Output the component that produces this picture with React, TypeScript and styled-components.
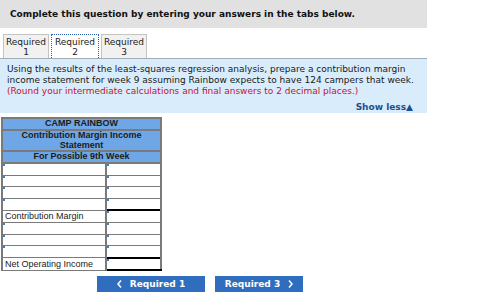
import React from "react";
import styled, { createGlobalStyle } from "styled-components";

const Global = createGlobalStyle`
  html, body { margin: 0; padding: 0; background: #fff; }
  body { font-family: "DejaVu Sans", Verdana, sans-serif; }
`;

const Page = styled.div`
  width: 427px;
`;

const Header = styled.div`
  background: #e1e1e1;
  height: 28px;
  display: flex;
  align-items: center;
  padding-left: 10px;
  font-size: 9px;
  font-weight: bold;
  color: #111;
`;

const Tabs = styled.div`
  display: flex;
  align-items: flex-end;
  gap: 2px;
  margin-top: 6px;
  padding-left: 3px;
  border-bottom: 1px solid #a3abb3;
`;

const Tab = styled.div<{ $active?: boolean }>`
  width: ${(p) => (p.$active ? 48 : 46)}px;
  height: 24px;
  box-sizing: border-box;
  display: flex;
  flex-direction: column;
  align-items: center;
  justify-content: center;
  font-size: 9px;
  line-height: 10px;
  color: #222;
  background: ${(p) => (p.$active ? "#fff" : "#f1f1f1")};
  border: ${(p) => (p.$active ? "1px dotted #2a5db0" : "1px solid #c4c4c4")};
  border-bottom: none;
`;

const Instructions = styled.div`
  background: #d9ecfb;
  padding: 5px 3px 1px 7px;
  font-size: 9px;
  line-height: 11px;
  color: #1a1a1a;
  height: 48px;
`;

const Red = styled.div`
  color: #c8102e;
`;

const ShowLess = styled.div`
  text-align: right;
  margin: 5px 11px 0 0;
  font-weight: bold;
  color: #1d4f8f;
  font-size: 9px;
`;

const Table = styled.table`
  margin: 4px 0 0 1px;
  border-collapse: collapse;
  width: 159px;
  font-family: "Liberation Sans", Arial, sans-serif;
  font-size: 9px;
  table-layout: fixed;
`;

const HeadCell = styled.td<{ $h: number }>`
  background: #6ea6e6;
  border: 2px solid #7a7a7a;
  text-align: center;
  font-weight: bold;
  color: #1b1b1b;
  padding: 0;
  line-height: 9.5px;
  height: ${(p) => p.$h}px;
`;

const Cell = styled.td<{ $top?: boolean; $bottom?: boolean }>`
  position: relative;
  border: 1px solid #7a7a7a;
  border-width: 1px 2px 1px 2px;
  ${(p) => (p.$top ? "border-top: 2px solid #000;" : "")}
  ${(p) => (p.$bottom ? "border-bottom: 2px solid #000;" : "")}
  height: 10.6px;
  padding: 0 0 0 2px;
  line-height: 10px;
  color: #222;
  white-space: nowrap;
  overflow: hidden;
`;

const Marker = styled.span`
  position: absolute;
  left: 0;
  top: 0;
  width: 2px;
  height: 2px;
  background: #3a7fd0;
`;

const Nav = styled.div`
  display: flex;
  gap: 10px;
  margin: 5px 0 0 97px;
`;

const NavButton = styled.div<{ $w: number }>`
  width: ${(p) => p.$w}px;
  height: 16px;
  background: #2f6ebe;
  color: #fff;
  font-weight: bold;
  font-size: 9px;
  display: flex;
  align-items: center;
  justify-content: center;
  gap: 8px;
`;

const Chevron = ({ dir }: { dir: "l" | "r" }) => (
  <svg width="5" height="8" viewBox="0 0 5 8">
    <path
      d={dir === "l" ? "M4 0.5 L1 4 L4 7.5" : "M1 0.5 L4 4 L1 7.5"}
      stroke="#fff"
      strokeWidth="1.5"
      fill="none"
    />
  </svg>
);

type Row = { label?: string; total?: "cm" | "noi" };
const rows: Row[] = [
  {}, {}, {}, {},
  { label: "Contribution Margin", total: "cm" },
  {}, {}, {},
  { label: "Net Operating Income", total: "noi" },
];

export default function App() {
  return (
    <Page>
      <Global />
      <Header>Complete this question by entering your answers in the tabs below.</Header>
      <Tabs>
        <Tab>
          <span>Required</span>
          <span>1</span>
        </Tab>
        <Tab $active>
          <span>Required</span>
          <span>2</span>
        </Tab>
        <Tab>
          <span>Required</span>
          <span>3</span>
        </Tab>
      </Tabs>
      <Instructions>
        <div>
          Using the results of the least-squares regression analysis, prepare a contribution margin
          income statement for week 9 assuming Rainbow expects to have 124 campers that week.
        </div>
        <Red>(Round your intermediate calculations and final answers to 2 decimal places.)</Red>
        <ShowLess>Show less▲</ShowLess>
      </Instructions>
      <Table>
        <colgroup>
          <col style={{ width: 104 }} />
          <col style={{ width: 55 }} />
        </colgroup>
        <tbody>
          <tr>
            <HeadCell colSpan={2} $h={10}>CAMP RAINBOW</HeadCell>
          </tr>
          <tr>
            <HeadCell colSpan={2} $h={18}>
              Contribution Margin Income
              <br />
              Statement
            </HeadCell>
          </tr>
          <tr>
            <HeadCell colSpan={2} $h={10}>For Possible 9th Week</HeadCell>
          </tr>
          {rows.map((r, i) => (
            <tr key={i}>
              <Cell>{r.label ? r.label : <Marker />}</Cell>
              <Cell $top={!!r.total} $bottom={r.total === "noi"}>
                <Marker />
              </Cell>
            </tr>
          ))}
        </tbody>
      </Table>
      <Nav>
        <NavButton $w={108}>
          <Chevron dir="l" />
          <span>Required 1</span>
        </NavButton>
        <NavButton $w={88}>
          <span>Required 3</span>
          <Chevron dir="r" />
        </NavButton>
      </Nav>
    </Page>
  );
}
